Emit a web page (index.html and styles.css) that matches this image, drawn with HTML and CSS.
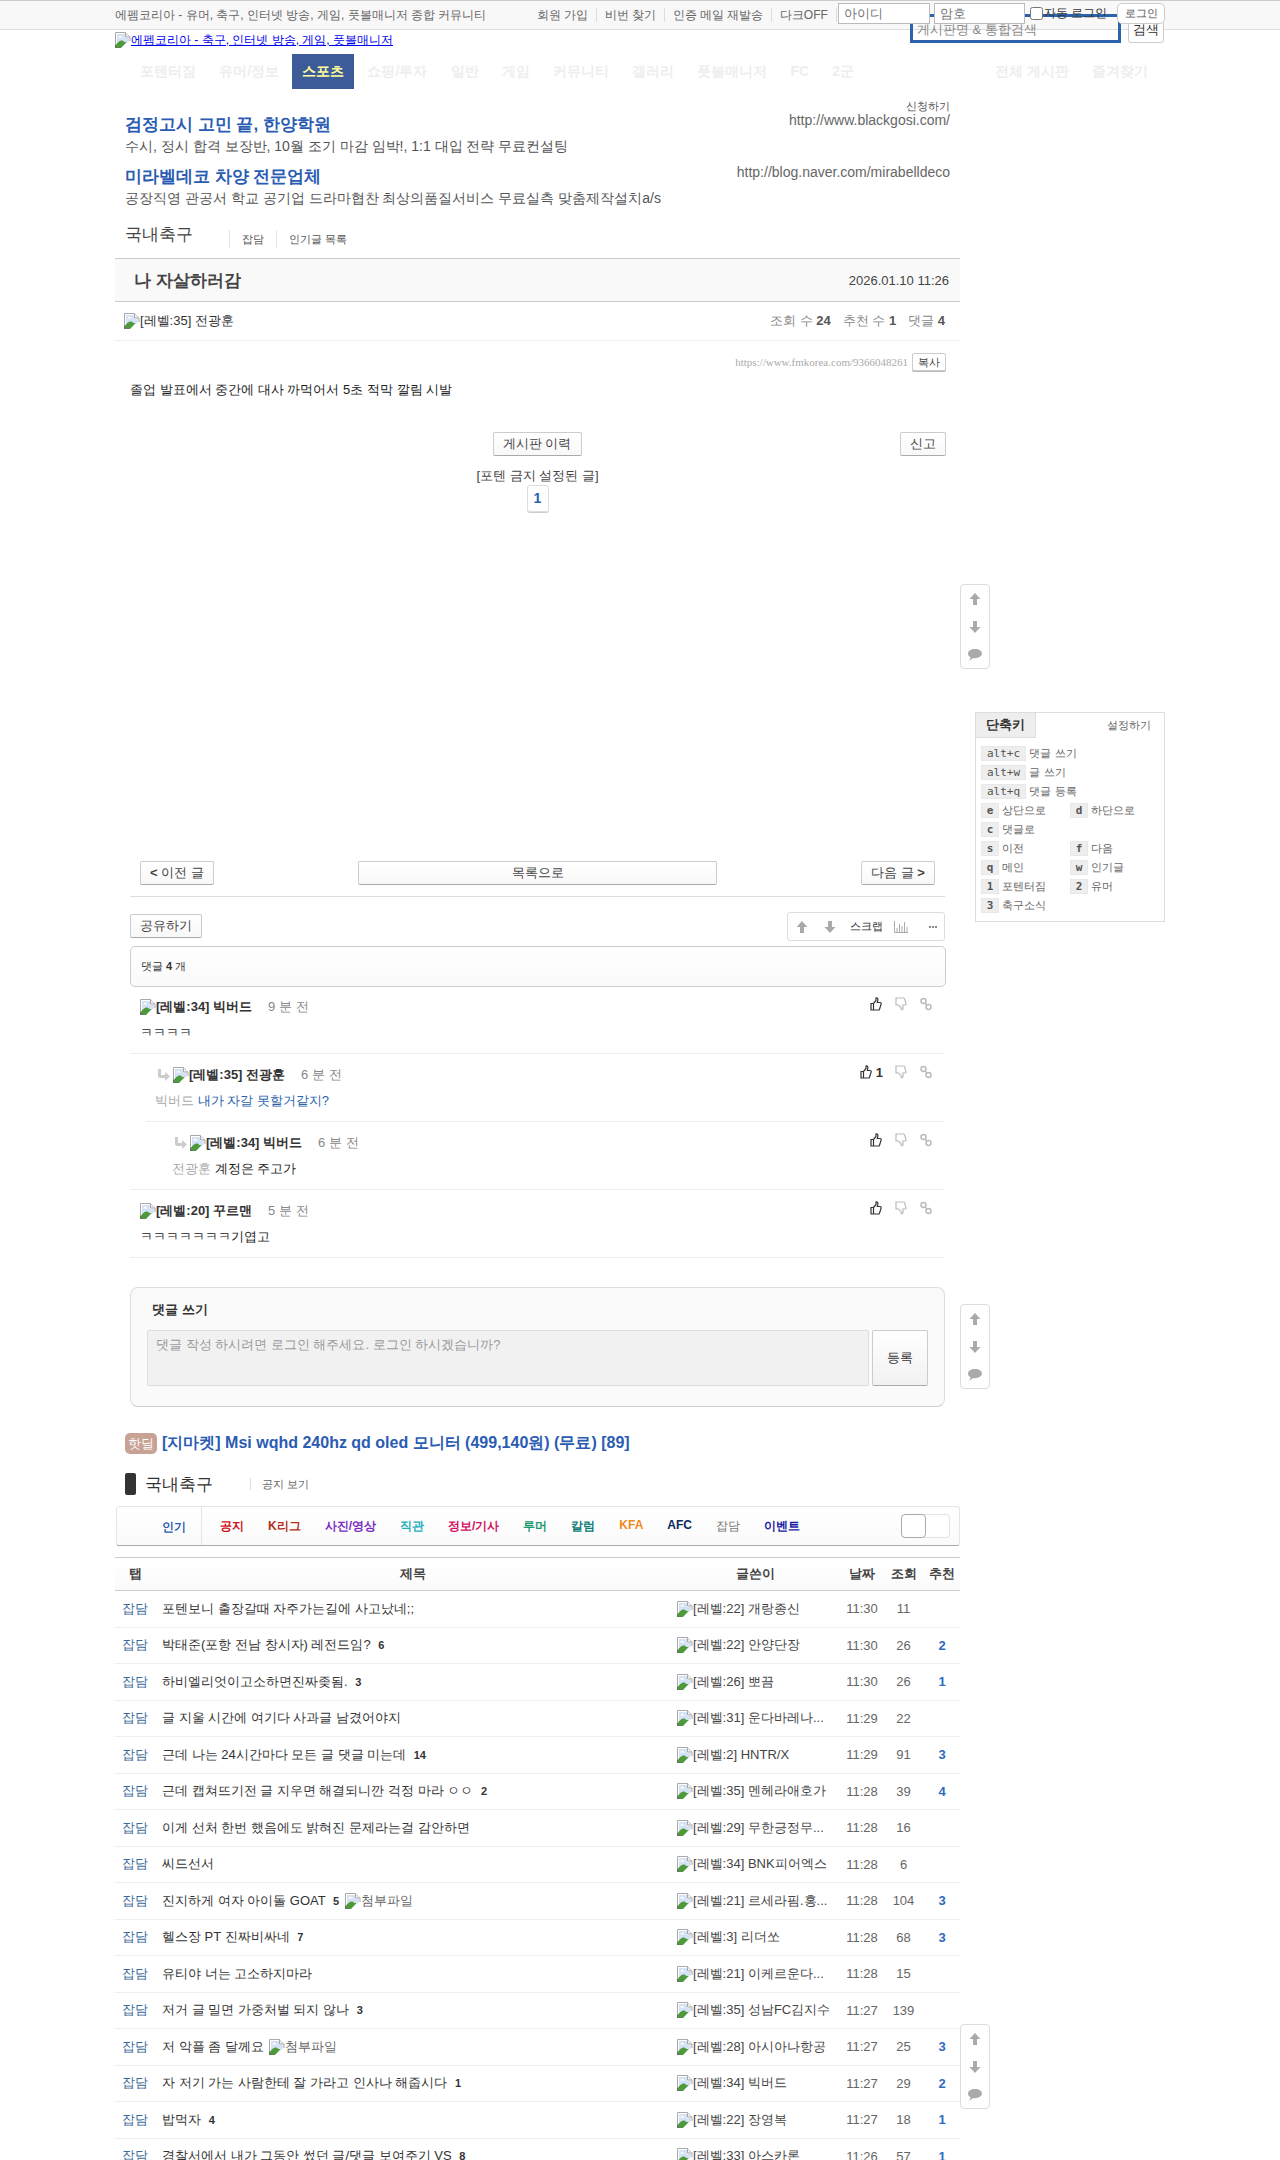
FILE: index.html
```html
<!DOCTYPE html>
<html>
<head>
<meta charset="utf-8">
<title>나 자살하러감 - 에펨코리아</title>
<link rel="stylesheet" href="styles.css">
</head>
<body>
<svg class="defs" width="0" height="0">
  <symbol id="broken" viewBox="0 0 16 16">
    <path d="M.5 15.500V.5h10l4.500 4.500v4" fill="#fff" stroke="#a8a8a8"/>
    <path d="M2 2h8v4h4v3l-7 6H2z" fill="#d5e2f6"/>
    <path d="M10.500.5v4.500H15" fill="#f0f0f0" stroke="#a8a8a8"/>
    <path d="M1 16v-3.500C3 10 5 8 7.500 8.500l2 1.500h2L6 16z" fill="#4e9a3a"/>
    <path d="M3 5.500l2-2 3 2z" fill="#fff"/>
    <path d="M.5 16h4M.5 16v-3" stroke="#6a6a6a"/>
  </symbol>
  <symbol id="up" viewBox="0 0 12 12"><path d="M6 0l5.500 6H8v6H4V6H.5z"/></symbol>
  <symbol id="down" viewBox="0 0 12 12"><path d="M6 12L.5 6H4V0h4v6h3.500z"/></symbol>
  <symbol id="bubble" viewBox="0 0 14 12"><path d="M7 0c3.900 0 7 2 7 4.600S10.900 9.200 7 9.200c-.7 0-1.400 0-2-.2L1.500 12 2.600 8.300C1 7.500 0 6.200 0 4.600 0 2 3.100 0 7 0z"/></symbol>
  <symbol id="thumb" viewBox="0 0 14 14"><path d="M2 6.500h2.500V13H2zM4.500 6.500L7 3.500V1c1.300-.5 2.200.8 1.800 2.300L8.300 5.500H11c1.100 0 1.400 1 1 1.900L10.500 12.200c-.2.500-.6.800-1.100.8H4.500" fill="none" stroke="currentColor" stroke-width="1.200"/></symbol>
  <symbol id="thumbd" viewBox="0 0 14 14"><path d="M2 1h7.500c.5 0 .8.200 1 .6L12 6.500c.2.800-.3 1.500-1 1.500H8.700l.4 2.500c.3 1.500-.9 2.500-1.800 2L7 10.500 4.500 8H2z" fill="none" stroke="currentColor" stroke-width="1.200"/></symbol>
  <symbol id="link" viewBox="0 0 14 14"><circle cx="4.500" cy="4" r="2.500" fill="none" stroke="currentColor" stroke-width="1.500"/><circle cx="9.500" cy="10" r="2.500" fill="none" stroke="currentColor" stroke-width="1.500"/><path d="M6 6l2 2" stroke="currentColor" stroke-width="1.500"/></symbol>
  <symbol id="reply" viewBox="0 0 12 12"><path d="M3 0v6h4V3l5 4.500L7 12V9H1.500L0 7.500V0z"/></symbol>
</svg>

<div class="top_bar">
  <div class="top_inner">
    <span class="slogan">에펨코리아 - 유머, 축구, 인터넷 방송, 게임, 풋볼매니저 종합 커뮤니티</span>
    <ul class="top_links">
      <li>회원 가입</li>
      <li>비번 찾기</li>
      <li>인증 메일 재발송</li>
      <li>다크OFF</li>
    </ul>
    <input class="login_input" type="text" placeholder="아이디">
    <input class="login_input pw" type="text" placeholder="암호">
    <label class="auto_login"><input type="checkbox">자동 로그인</label>
    <button class="login_btn">로그인</button>
  </div>
</div>

<div class="wrap">
  <div class="search_box">게시판명 &amp; 통합검색</div>
  <button class="search_btn">검색</button>

  <a class="logo" href="#"><svg class="broken"><use href="#broken"/></svg>에펨코리아 - 축구, 인터넷 방송, 게임, 풋볼매니저</a>

  <ul class="gnb">
    <li>포텐터짐</li>
    <li>유머/정보</li>
    <li class="on">스포츠</li>
    <li>쇼핑/투자</li>
    <li>일반</li>
    <li>게임</li>
    <li>커뮤니티</li>
    <li>갤러리</li>
    <li>풋볼매니저</li>
    <li>FC</li>
    <li>2군</li>
    <li class="push">전체 게시판</li>
    <li>즐겨찾기</li>
  </ul>

  <div class="columns">
    <div class="main">
      <div class="ad_apply">신청하기</div>
      <div class="ad">
        <div class="ad_text">
          <a class="ad_title" href="#">검정고시 고민 끝, 한양학원</a>
          <p class="ad_desc">수시, 정시 합격 보장반, 10월 조기 마감 임박!, 1:1 대입 전략 무료컨설팅</p>
        </div>
        <span class="ad_url">http://www.blackgosi.com/</span>
      </div>
      <div class="ad">
        <div class="ad_text">
          <a class="ad_title" href="#">미라벨데코 차양 전문업체</a>
          <p class="ad_desc">공장직영 관공서 학교 공기업 드라마협찬 최상의품질서비스 무료실측 맞춤제작설치a/s</p>
        </div>
        <span class="ad_url">http://blog.naver.com/mirabelldeco</span>
      </div>

      <div class="board_head">
        <h2>국내축구</h2>
        <span class="board_link first">잡담</span>
        <span class="board_link">인기글 목록</span>
      </div>

      <div class="doc_title">
        <h1>나 자살하러감</h1>
        <span class="date">2026.01.10 11:26</span>
      </div>
      <div class="doc_meta">
        <span class="writer"><svg class="broken"><use href="#broken"/></svg>[레벨:35] 전광훈</span>
        <span class="counts">조회 수 <b>24</b><i></i>추천 수 <b>1</b><i></i>댓글 <b>4</b></span>
      </div>
      <div class="doc_url">
        <span>https://www.fmkorea.com/9366048261</span>
        <button class="copy_btn">복사</button>
      </div>
      <p class="doc_body">졸업 발표에서 중간에 대사 까먹어서 5초 적막 깔림 시발</p>

      <div class="doc_actions">
        <button class="btn history">게시판 이력</button>
        <button class="btn report">신고</button>
      </div>
      <p class="no_poten">[포텐 금지 설정된 글]</p>
      <div class="vote_count"><span>1</span></div>

      <div class="doc_nav">
        <button class="btn nav_btn"><b>&lt;</b> 이전 글</button>
        <button class="btn list_btn">목록으로</button>
        <button class="btn nav_btn">다음 글 <b>&gt;</b></button>
      </div>

      <div class="share_row">
        <button class="btn share">공유하기</button>
        <div class="tools">
          <svg class="ic"><use href="#up"/></svg>
          <svg class="ic last"><use href="#down"/></svg>
          <span>스크랩</span>
          <svg class="stat" viewBox="0 0 14 12"><path d="M.5 0v11.500H14M3 11V7M5.500 11V3M8 11V5M10.500 11V1M13 11V6" fill="none" stroke="#aaa"/></svg>
          <span class="more"><i></i><i></i><i></i></span>
        </div>
      </div>

      <div class="cmt_count">댓글 <b>4</b> 개</div>

      <ul class="cmt_list">
        <li class="cmt">
          <div class="cmt_top">
            <b class="cmt_name"><svg class="broken"><use href="#broken"/></svg>[레벨:34] 빅버드</b>
            <span class="cmt_time">9 분 전</span>
            <span class="cmt_btns"><svg class="th"><use href="#thumb"/></svg><svg class="th off"><use href="#thumbd"/></svg><svg class="th off"><use href="#link"/></svg></span>
          </div>
          <p class="cmt_text">ㅋㅋㅋㅋ</p>
        </li>
        <li class="cmt re1">
          <div class="cmt_top">
            <svg class="re_arrow"><use href="#reply"/></svg>
            <b class="cmt_name"><svg class="broken"><use href="#broken"/></svg>[레벨:35] 전광훈</b>
            <span class="cmt_time">6 분 전</span>
            <span class="cmt_btns"><svg class="th"><use href="#thumb"/></svg><b class="th_num">1</b><svg class="th off"><use href="#thumbd"/></svg><svg class="th off"><use href="#link"/></svg></span>
          </div>
          <p class="cmt_text"><span class="to">빅버드</span> <span class="blue">내가 자갈 못할거같지?</span></p>
        </li>
        <li class="cmt re2">
          <div class="cmt_top">
            <svg class="re_arrow"><use href="#reply"/></svg>
            <b class="cmt_name"><svg class="broken"><use href="#broken"/></svg>[레벨:34] 빅버드</b>
            <span class="cmt_time">6 분 전</span>
            <span class="cmt_btns"><svg class="th"><use href="#thumb"/></svg><svg class="th off"><use href="#thumbd"/></svg><svg class="th off"><use href="#link"/></svg></span>
          </div>
          <p class="cmt_text"><span class="to">전광훈</span> 계정은 주고가</p>
        </li>
        <li class="cmt">
          <div class="cmt_top">
            <b class="cmt_name"><svg class="broken"><use href="#broken"/></svg>[레벨:20] 꾸르맨</b>
            <span class="cmt_time">5 분 전</span>
            <span class="cmt_btns"><svg class="th"><use href="#thumb"/></svg><svg class="th off"><use href="#thumbd"/></svg><svg class="th off"><use href="#link"/></svg></span>
          </div>
          <p class="cmt_text">ㅋㅋㅋㅋㅋㅋㅋ기엽고</p>
        </li>
      </ul>

      <div class="write_box">
        <h3>댓글 쓰기</h3>
        <div class="write_row">
          <div class="write_area">댓글 작성 하시려면 로그인 해주세요. 로그인 하시겠습니까?</div>
          <button class="write_btn">등록</button>
        </div>
      </div>

      <div class="hotdeal"><span class="badge">핫딜</span><a href="#">[지마켓] Msi wqhd 240hz qd oled 모니터 (499,140원) (무료) [89]</a></div>

      <div class="list_head">
        <i class="bar"></i>
        <h2>국내축구</h2>
        <span>공지 보기</span>
      </div>

      <div class="cates">
        <span class="pop">인기</span>
        <ul>
          <li class="c1">공지</li>
          <li class="c2">K리그</li>
          <li class="c3">사진/영상</li>
          <li class="c4">직관</li>
          <li class="c5">정보/기사</li>
          <li class="c6">루머</li>
          <li class="c7">칼럼</li>
          <li class="c8">KFA</li>
          <li class="c9">AFC</li>
          <li class="c10">잡담</li>
          <li class="c11">이벤트</li>
        </ul>
        <span class="toggle"><i></i></span>
      </div>

      <table class="bd_list">
        <thead>
          <tr><th class="t_cate">탭</th><th>제목</th><th class="t_author">글쓴이</th><th class="t_time">날짜</th><th class="t_view">조회</th><th class="t_vote">추천</th></tr>
        </thead>
        <tbody>
          <tr><td class="cate">잡담</td><td class="subj">포텐보니 출장갈때 자주가는길에 사고났네;;</td><td class="author"><svg class="broken"><use href="#broken"/></svg>[레벨:22] 개랑종신</td><td class="num">11:30</td><td class="num">11</td><td class="vote"></td></tr>
          <tr><td class="cate">잡담</td><td class="subj">박태준(포항 전남 창시자) 레전드임? <b>6</b></td><td class="author"><svg class="broken"><use href="#broken"/></svg>[레벨:22] 안양단장</td><td class="num">11:30</td><td class="num">26</td><td class="vote">2</td></tr>
          <tr><td class="cate">잡담</td><td class="subj">하비엘리엇이고소하면진짜좆됨. <b>3</b></td><td class="author"><svg class="broken"><use href="#broken"/></svg>[레벨:26] 뽀끔</td><td class="num">11:30</td><td class="num">26</td><td class="vote">1</td></tr>
          <tr><td class="cate">잡담</td><td class="subj">글 지울 시간에 여기다 사과글 남겼어야지</td><td class="author"><svg class="broken"><use href="#broken"/></svg>[레벨:31] 운다바레나...</td><td class="num">11:29</td><td class="num">22</td><td class="vote"></td></tr>
          <tr><td class="cate">잡담</td><td class="subj">근데 나는 24시간마다 모든 글 댓글 미는데 <b>14</b></td><td class="author"><svg class="broken"><use href="#broken"/></svg>[레벨:2] HNTR/X</td><td class="num">11:29</td><td class="num">91</td><td class="vote">3</td></tr>
          <tr><td class="cate">잡담</td><td class="subj">근데 캡쳐뜨기전 글 지우면 해결되니깐 걱정 마라 ㅇㅇ <b>2</b></td><td class="author"><svg class="broken"><use href="#broken"/></svg>[레벨:35] 멘헤라애호가</td><td class="num">11:28</td><td class="num">39</td><td class="vote">4</td></tr>
          <tr><td class="cate">잡담</td><td class="subj">이게 선처 한번 했음에도 밝혀진 문제라는걸 감안하면</td><td class="author"><svg class="broken"><use href="#broken"/></svg>[레벨:29] 무한긍정무...</td><td class="num">11:28</td><td class="num">16</td><td class="vote"></td></tr>
          <tr><td class="cate">잡담</td><td class="subj">씨드선서</td><td class="author"><svg class="broken"><use href="#broken"/></svg>[레벨:34] BNK피어엑스</td><td class="num">11:28</td><td class="num">6</td><td class="vote"></td></tr>
          <tr><td class="cate">잡담</td><td class="subj">진지하게 여자 아이돌 GOAT <b>5</b> <span class="attach"><svg class="broken"><use href="#broken"/></svg>첨부파일</span></td><td class="author"><svg class="broken"><use href="#broken"/></svg>[레벨:21] 르세라핌.홍...</td><td class="num">11:28</td><td class="num">104</td><td class="vote">3</td></tr>
          <tr><td class="cate">잡담</td><td class="subj">헬스장 PT 진짜비싸네 <b>7</b></td><td class="author"><svg class="broken"><use href="#broken"/></svg>[레벨:3] 리더쏘</td><td class="num">11:28</td><td class="num">68</td><td class="vote">3</td></tr>
          <tr><td class="cate">잡담</td><td class="subj">유티야 너는 고소하지마라</td><td class="author"><svg class="broken"><use href="#broken"/></svg>[레벨:21] 이케르운다...</td><td class="num">11:28</td><td class="num">15</td><td class="vote"></td></tr>
          <tr><td class="cate">잡담</td><td class="subj">저거 글 밀면 가중처벌 되지 않나 <b>3</b></td><td class="author"><svg class="broken"><use href="#broken"/></svg>[레벨:35] 성남FC김지수</td><td class="num">11:27</td><td class="num">139</td><td class="vote"></td></tr>
          <tr><td class="cate">잡담</td><td class="subj">저 악플 좀 달께요 <span class="attach"><svg class="broken"><use href="#broken"/></svg>첨부파일</span></td><td class="author"><svg class="broken"><use href="#broken"/></svg>[레벨:28] 아시아나항공</td><td class="num">11:27</td><td class="num">25</td><td class="vote">3</td></tr>
          <tr><td class="cate">잡담</td><td class="subj">자 저기 가는 사람한테 잘 가라고 인사나 해줍시다 <b>1</b></td><td class="author"><svg class="broken"><use href="#broken"/></svg>[레벨:34] 빅버드</td><td class="num">11:27</td><td class="num">29</td><td class="vote">2</td></tr>
          <tr><td class="cate">잡담</td><td class="subj">밥먹자 <b>4</b></td><td class="author"><svg class="broken"><use href="#broken"/></svg>[레벨:22] 장영복</td><td class="num">11:27</td><td class="num">18</td><td class="vote">1</td></tr>
          <tr><td class="cate">잡담</td><td class="subj">경찰서에서 내가 그동안 썼던 글/댓글 보여주기 VS <b>8</b></td><td class="author"><svg class="broken"><use href="#broken"/></svg>[레벨:33] 아스카론</td><td class="num">11:26</td><td class="num">57</td><td class="vote">1</td></tr>
        </tbody>
      </table>
    </div>

    <div class="side">
      <div class="shortcut">
        <div class="sc_head"><b>단축키</b><span>설정하기</span></div>
        <div class="sc_body">
          <div class="sc_row"><kbd>alt+c</kbd> 댓글 쓰기</div>
          <div class="sc_row"><kbd>alt+w</kbd> 글 쓰기</div>
          <div class="sc_row"><kbd>alt+q</kbd> 댓글 등록</div>
          <div class="sc_two"><span><kbd>e</kbd> 상단으로</span><span><kbd>d</kbd> 하단으로</span></div>
          <div class="sc_two"><span><kbd>c</kbd> 댓글로</span></div>
          <div class="sc_two"><span><kbd>s</kbd> 이전</span><span><kbd>f</kbd> 다음</span></div>
          <div class="sc_two"><span><kbd>q</kbd> 메인</span><span><kbd>w</kbd> 인기글</span></div>
          <div class="sc_two"><span><kbd>1</kbd> 포텐터짐</span><span><kbd>2</kbd> 유머</span></div>
          <div class="sc_two"><span><kbd>3</kbd> 축구소식</span></div>
        </div>
      </div>
    </div>
  </div>

  <div class="float_btns f1"><svg class="ic"><use href="#up"/></svg><svg class="ic"><use href="#down"/></svg><svg class="ic wide"><use href="#bubble"/></svg></div>
  <div class="float_btns f2"><svg class="ic"><use href="#up"/></svg><svg class="ic"><use href="#down"/></svg><svg class="ic wide"><use href="#bubble"/></svg></div>
  <div class="float_btns f3"><svg class="ic"><use href="#up"/></svg><svg class="ic"><use href="#down"/></svg><svg class="ic wide"><use href="#bubble"/></svg></div>
</div>
</body>
</html>
```

FILE: styles.css
```css
body
{
    margin: 0;
    background: #fff;
    color: #333;
    font-family: "Liberation Sans", sans-serif;
    font-size: 13px;
    overflow: hidden;
}
ul
{
    list-style: none;
    margin: 0;
    padding: 0;
}
p, h1, h2, h3
{
    margin: 0;
}
button
{
    font-family: inherit;
    cursor: pointer;
}
.defs
{
    position: absolute;
}
.broken
{
    width: 16px;
    height: 16px;
    vertical-align: -4px;
}

/* top bar */
.top_bar
{
    height: 28px;
    background: #f8f8f8;
    border-top: 1px solid #ccc;
    border-bottom: 1px solid #ddd;
    box-sizing: content-box;
    margin-bottom: -1px;
}
.top_inner
{
    width: 1050px;
    margin-left: 115px;
    height: 28px;
    display: flex;
    align-items: center;
    font-size: 12px;
    color: #666;
    position: relative;
}
.slogan
{
    width: 422px;
    white-space: nowrap;
}
.top_links
{
    display: flex;
    width: 301px;
    white-space: nowrap;
}
.top_links li
{
    padding-right: 8px;
    margin-right: 7.500px;
    border-right: 1px solid #ddd;
    line-height: 14px;
}
.login_input
{
    position: relative;
    z-index: 2;
    width: 92px;
    height: 21px;
    box-sizing: border-box;
    margin: -3px 4px 0 0;
    padding: 0 5px;
    border: 1px solid #bbb;
    font-size: 13px;
    font-family: inherit;
    background: #fff;
}
.login_input.pw
{
    width: 91px;
    margin-right: 5px;
}
.auto_login
{
    position: relative;
    z-index: 2;
    display: flex;
    align-items: center;
    color: #333;
    margin-top: -3px;
    width: 87px;
    font-size: 12px;
    white-space: nowrap;
}
.auto_login input
{
    width: 13px;
    height: 13px;
    margin: 0 1px 0 0;
}
.login_btn
{
    position: relative;
    z-index: 2;
    width: 48px;
    height: 21px;
    padding: 0;
    margin-top: -3px;
    background: #fff;
    border: 1px solid #ccc;
    border-radius: 5px;
    font-size: 11px;
    color: #555;
}

.wrap
{
    position: relative;
    margin-left: 115px;
    width: 1050px;
}
.search_box
{
    position: absolute;
    z-index: 1;
    left: 795px;
    top: -15px;
    width: 211px;
    height: 29px;
    box-sizing: border-box;
    border: 3px solid #2a62ab;
    padding: 5px 4px 0;
    font-size: 13px;
    line-height: 15px;
    color: #888;
    overflow: hidden;
}
.search_btn
{
    position: absolute;
    z-index: 1;
    left: 1013px;
    top: -9px;
    width: 36px;
    height: 23px;
    padding: 0 0 5px;
    background: #fff;
    border: 1px solid #ccc;
    border-radius: 3px;
    font-size: 13px;
    color: #333;
}
.logo
{
    display: block;
    height: 25px;
    padding-top: 3px;
    box-sizing: border-box;
    color: #00e;
    font-size: 12px;
}
.gnb
{
    display: flex;
    height: 35px;
    padding-left: 13.400px;
    font-size: 14px;
    font-weight: bold;
    color: #eee;
    line-height: 35px;
    width: 1031.600px;
    white-space: nowrap;
}
.gnb li
{
    padding: 0 11.600px;
}
.gnb .on
{
    background: #3d5a99;
    color: #ff9;
    padding: 0 10px;
    margin: 0 1.600px;
}
.gnb .push
{
    margin-left: auto;
}

.columns
{
    display: flex;
}
.main
{
    width: 845px;
}

/* ads */
.ad_apply
{
    text-align: right;
    padding: 11px 10px 0 0;
    height: 23px;
    box-sizing: border-box;
    font-size: 11px;
    line-height: 12px;
    color: #555;
}
.ad
{
    display: flex;
    justify-content: space-between;
    padding: 0 10px;
    height: 52px;
}
.ad_text
{
    padding-top: 2px;
}
.ad_title
{
    display: block;
    font-size: 17px;
    font-weight: bold;
    color: #2a5cb3;
    line-height: 22px;
    text-decoration: none;
}
.ad_desc
{
    font-size: 14px;
    line-height: 20px;
    color: #555;
}
.ad_url
{
    font-size: 14px;
    color: #666;
    line-height: 16px;
}
.board_head
{
    display: flex;
    align-items: flex-end;
    height: 42px;
    padding: 0 10px 9px;
    box-sizing: border-box;
    margin-top: -1px;
}
.board_head h2
{
    font-size: 17px;
    font-weight: normal;
    color: #444;
    width: 104px;
    line-height: 26px;
}
.board_link
{
    font-size: 11px;
    color: #555;
    padding: 0 12px;
    border-left: 1px solid #e5e5e5;
    height: 18px;
    line-height: 18px;
}

/* article */
.doc_title
{
    display: flex;
    justify-content: space-between;
    align-items: center;
    height: 42px;
    margin-top: 1px;
    padding: 0 11px 0 19px;
    background: #f9f9f9;
    border-top: 1px solid #ccc;
    border-bottom: 1px solid #ccc;
}
.doc_title h1
{
    font-size: 17px;
    color: #444;
}
.date
{
    color: #444;
    font-size: 13px;
}
.doc_meta
{
    display: flex;
    justify-content: space-between;
    align-items: center;
    height: 38px;
    padding: 0 15px 0 9px;
    border-bottom: 1px solid #eee;
}
.counts
{
    color: #888;
}
.counts b
{
    color: #555;
}
.counts i
{
    display: inline-block;
    width: 12px;
}
.doc_url
{
    display: flex;
    justify-content: flex-end;
    align-items: center;
    height: 24px;
    margin-top: 9px;
    padding-right: 14px;
    font-family: "Liberation Serif", serif;
    font-size: 11px;
    color: #aaa;
}
.copy_btn
{
    width: 34px;
    height: 18px;
    margin-left: 4px;
    padding: 0;
    background: #fff;
    border: 1px solid #ccc;
    border-radius: 2px;
    box-shadow: 0 1px 0 #bbb;
    font-size: 11px;
    color: #444;
}
.doc_body
{
    padding: 7px 15px 0;
    height: 37px;
    line-height: 18px;
    color: #222;
}
.btn
{
    background: linear-gradient(#fff, #f8f8f8);
    border: 1px solid #ccc;
    border-bottom-color: #aaa;
    border-radius: 2px;
    padding: 0;
    font-size: 13px;
    color: #444;
    height: 24px;
}
.doc_actions
{
    position: relative;
    display: flex;
    justify-content: center;
    margin-top: 14px;
    height: 24px;
}
.history
{
    width: 89px;
    margin-left: -1px;
}
.report
{
    position: absolute;
    right: 14px;
    width: 46px;
}
.no_poten
{
    text-align: center;
    margin-top: 11px;
    line-height: 18px;
    color: #444;
}
.vote_count
{
    display: flex;
    justify-content: center;
}
.vote_count span
{
    width: 22px;
    height: 27px;
    box-sizing: border-box;
    border: 1px solid #ddd;
    border-radius: 3px;
    box-shadow: 0 1px 0 #ccc;
    text-align: center;
    line-height: 24px;
    font-size: 14px;
    font-weight: bold;
    color: #2a62ab;
}
.doc_nav
{
    display: flex;
    justify-content: space-between;
    margin: 349px 25px 0 25px;
}
.nav_btn
{
    width: 74px;
}
.list_btn
{
    width: 359px;
}
.share_row
{
    display: flex;
    justify-content: space-between;
    align-items: flex-start;
    margin: 11px 15px 0;
    padding-top: 16px;
    border-top: 1px solid #ddd;
}
.share
{
    width: 72px;
    margin-top: 1px;
}
.tools
{
    display: flex;
    align-items: center;
    width: 158px;
    height: 29px;
    margin-top: -1px;
    box-sizing: border-box;
    border: 1px solid #ddd;
    border-radius: 3px;
    padding: 0 7px 0 8px;
    font-size: 11px;
    color: #333;
}
.ic
{
    width: 12px;
    height: 12px;
    fill: #aaa;
    margin-right: 16px;
}
.tools .last
{
    margin-right: 14px;
}
.tools .stat
{
    width: 14px;
    height: 12px;
    margin-left: 11px;
}
.more
{
    display: flex;
    gap: 1px;
    margin-left: auto;
}
.more i
{
    width: 2px;
    height: 2px;
    background: #888;
}
.cmt_count
{
    margin: 5px 14px 0 15px;
    height: 41px;
    box-sizing: border-box;
    border: 1px solid #ccc;
    border-radius: 5px;
    background: linear-gradient(#fff, #fafafa);
    padding-left: 10px;
    font-size: 11px;
    line-height: 39px;
}
.cmt_list
{
    margin: 10px 15px 0;
}
.cmt
{
    height: 56px;
    padding-left: 10px;
    border-bottom: 1px solid #eee;
    margin-bottom: 11px;
    position: relative;
}
.cmt.re1
{
    margin-left: 16px;
    padding-left: 9px;
}
.cmt.re2
{
    padding-left: 42px;
}
.cmt_top
{
    display: flex;
    align-items: center;
    height: 20px;
}
.cmt_name
{
    color: #333;
}
.cmt_time
{
    margin-left: 16px;
    color: #888;
}
.re_arrow
{
    width: 12px;
    height: 12px;
    fill: #ccc;
    margin: 0 3px 0 3px;
}
.cmt_btns
{
    display: flex;
    align-items: center;
    margin-left: auto;
    margin-right: 12px;
    color: #333;
    margin-top: -6px;
}
.th
{
    width: 14px;
    height: 14px;
    margin-left: 11px;
}
.th.off
{
    color: #bbb;
}
.th_num
{
    margin-left: 3px;
    font-size: 13px;
}
.cmt_text
{
    margin-top: 6.500px;
    line-height: 18px;
    color: #222;
}
.to
{
    color: #aaa;
}
.blue
{
    color: #2a62ab;
}

/* comment form */
.write_box
{
    margin: 29px 15px 0;
    height: 120px;
    box-sizing: border-box;
    background: #fafafa;
    border: 1px solid #ddd;
    border-bottom-color: #ccc;
    border-radius: 8px;
    padding: 12px 16px 0;
}
.write_box h3
{
    font-size: 13px;
    color: #333;
    padding-left: 5px;
    line-height: 20px;
}
.write_row
{
    display: flex;
    justify-content: space-between;
    margin-top: 10px;
    height: 56px;
}
.write_area
{
    width: 722px;
    box-sizing: border-box;
    background: #f1f1f1;
    border: 1px solid #ddd;
    border-radius: 2px;
    padding: 5px 8px;
    color: #999;
    line-height: 18px;
}
.write_btn
{
    width: 56px;
    padding: 0;
    background: linear-gradient(#fff, #f1f1f1);
    border: 1px solid #ccc;
    border-bottom-color: #aaa;
    border-radius: 2px;
    font-size: 13px;
    color: #333;
}

.hotdeal
{
    display: flex;
    align-items: center;
    margin: 26px 0 0 10px;
    height: 21px;
}
.badge
{
    width: 32px;
    height: 21px;
    background: #c7a295;
    border-radius: 5px;
    color: #fff;
    text-align: center;
    line-height: 21px;
    font-size: 13px;
    margin-right: 5px;
}
.hotdeal a
{
    font-size: 16px;
    font-weight: bold;
    color: #2a5cb3;
    text-decoration: none;
}
.list_head
{
    display: flex;
    align-items: center;
    margin: 19px 0 0 10px;
    height: 22px;
}
.bar
{
    width: 11px;
    height: 22px;
    border-radius: 2px;
    background: #333;
    margin-right: 9px;
}
.list_head h2
{
    font-size: 17px;
    font-weight: normal;
    color: #333;
    width: 105px;
}
.list_head span
{
    font-size: 11px;
    color: #666;
    border-left: 1px solid #ddd;
    padding-left: 11px;
    line-height: 12px;
}
.cates
{
    display: flex;
    align-items: center;
    margin: 11px 0 0 1px;
    height: 40px;
    box-sizing: border-box;
    border: 1px solid #e5e5e5;
    border-bottom: 1px solid #aaa;
    border-radius: 3px;
    background: linear-gradient(#fff, #fafafa);
    font-size: 12px;
    font-weight: bold;
}
.pop
{
    width: 85px;
    height: 100%;
    box-sizing: border-box;
    padding: 12px 15px 0 0;
    line-height: 16px;
    text-align: right;
    color: #2a5cb3;
    border-right: 1px solid #e5e5e5;
}
.cates ul
{
    display: flex;
    gap: 24px;
    padding-left: 18px;
}
.c1 { color: #d0121b; }
.c2 { color: #b0321a; }
.c3 { color: #7a2bc0; }
.c4 { color: #25aec0; }
.c5 { color: #d01060; }
.c6 { color: #1d9a70; }
.c7 { color: #0f7d78; }
.c8 { color: #ee8a1f; }
.c9 { color: #0a2a5a; }
.c10 { color: #777; font-weight: normal; }
.c11 { color: #1a1aa8; }
.toggle
{
    width: 49px;
    height: 24px;
    box-sizing: border-box;
    margin-left: auto;
    margin-right: 9px;
    border: 1px solid #e2e2e2;
    border-radius: 4px;
    background: #fff;
}
.toggle i
{
    display: block;
    width: 25px;
    height: 24px;
    margin: -1px;
    box-sizing: border-box;
    border: 1px solid #aaa;
    border-radius: 4px;
    background: #fff;
}

/* list */
.bd_list
{
    width: 845px;
    margin-top: 11px;
    border-collapse: collapse;
    table-layout: fixed;
}
.bd_list th
{
    height: 32px;
    padding: 0;
    border-top: 1px solid #ccc;
    border-bottom: 1px solid #ccc;
    background: linear-gradient(#fff, #fafafa);
    font-size: 13px;
    color: #444;
}
.t_cate { width: 40px; }
.t_author { width: 171px; }
.t_time { width: 42px; }
.t_view { width: 41px; }
.t_vote { width: 36px; }
.bd_list td
{
    height: 35.500px;
    padding: 0;
    border-bottom: 1px solid #eee;
    white-space: nowrap;
    overflow: hidden;
}
.bd_list .cate
{
    text-align: center;
    color: #3a6a9a;
}
.bd_list .subj
{
    padding-left: 7px;
    color: #333;
}
.subj b
{
    margin-left: 4px;
    font-size: 11px;
}
.attach
{
    margin-left: 2px;
    color: #666;
}
.bd_list .author
{
    padding-left: 7px;
    color: #444;
}
.bd_list .num
{
    text-align: center;
    color: #666;
}
.bd_list .vote
{
    text-align: center;
    font-weight: bold;
    color: #2f6ac0;
}

/* right side */
.side
{
    padding: 623px 0 0 15px;
}
.shortcut
{
    width: 190px;
    height: 210px;
    box-sizing: border-box;
    border: 1px solid #ddd;
    font-family: "DejaVu Sans", sans-serif;
    font-size: 11px;
    color: #666;
}
.sc_head
{
    display: flex;
    justify-content: space-between;
    align-items: center;
    padding-right: 13px;
    height: 25px;
}
.sc_head b
{
    width: 60px;
    height: 25px;
    box-sizing: border-box;
    background: #eee;
    border-right: 1px solid #ddd;
    border-bottom: 1px solid #ddd;
    text-align: center;
    line-height: 24px;
    font-size: 13px;
    color: #333;
}
.sc_body
{
    padding: 7px 5px 0;
}
.sc_row, .sc_two
{
    height: 19px;
    line-height: 17px;
}
.sc_two
{
    display: flex;
}
.sc_two span
{
    width: 97px;
}
kbd
{
    display: inline-block;
    min-width: 18px;
    height: 15px;
    padding: 0 1px;
    box-sizing: border-box;
    background: #eee;
    border: 1px solid #e8e8e8;
    text-align: center;
    font-family: "DejaVu Sans Mono", monospace;
    font-size: 11px;
    line-height: 14px;
    color: #555;
}
.sc_row kbd
{
    width: 45px;
}
.sc_two kbd
{
    font-weight: bold;
}
.float_btns
{
    position: absolute;
    left: 845px;
    width: 30px;
    height: 85px;
    box-sizing: border-box;
    display: flex;
    flex-direction: column;
    align-items: center;
    justify-content: space-between;
    padding: 8px 0 7px;
    background: #fff;
    border: 1px solid #ddd;
    border-radius: 4px;
}
.float_btns .ic
{
    margin: 0;
}
.float_btns .wide
{
    width: 14px;
}
.f1 { top: 555px; }
.f2 { top: 1275px; }
.f3 { top: 1995px; }
```
